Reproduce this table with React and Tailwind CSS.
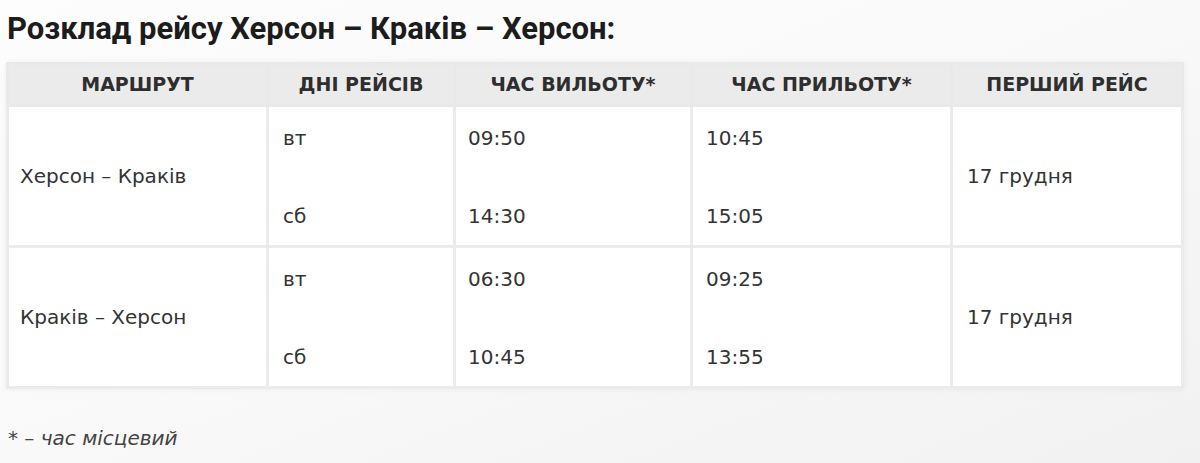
import React from 'react'

const rows = [
  {
    route: 'Херсон – Краків',
    days: ['вт', 'сб'],
    dep: ['09:50', '14:30'],
    arr: ['10:45', '15:05'],
    first: '17 грудня'
  },
  {
    route: 'Краків – Херсон',
    days: ['вт', 'сб'],
    dep: ['06:30', '10:45'],
    arr: ['09:25', '13:55'],
    first: '17 грудня'
  }
]

const heads = ['МАРШРУТ', 'ДНІ РЕЙСІВ', 'ЧАС ВИЛЬОТУ*', 'ЧАС ПРИЛЬОТУ*', 'ПЕРШИЙ РЕЙС']
const widths = ['w-[260px]', 'w-[187px]', 'w-[237px]', 'w-[260px]', 'w-[231px]']

function Pair({ items }) {
  return (
    <div className="flex flex-col justify-between h-[108px] leading-[30px]">
      <span>{items[0]}</span>
      <span>{items[1]}</span>
    </div>
  )
}

export default function App() {
  return (
    <div className="w-[1200px] h-[463px] overflow-hidden bg-gradient-to-br from-[#fdfdfd] via-[#f9f9f9] to-[#f1f1f1] font-['DejaVu_Sans',sans-serif] text-[#333]">
      <h2 className="pl-[7px] pt-[10px] h-[62px] font-['Roboto',sans-serif] font-bold text-[31px] leading-[38px] text-[#1c1c1c]">
        Розклад рейсу Херсон – Краків – Херсон:
      </h2>

      <table className="ml-[6px] border-collapse border-2 border-[#d9d9d9] text-[20px] shadow-[0_0_6px_rgba(0,0,0,0.06)]">
        <thead>
          <tr className="bg-[#ebebeb] h-[42px]">
            {heads.map((h, i) => (
              <th key={h} className={`${widths[i]} border-[3px] border-[#e9e9e9] font-bold text-center text-[19px] text-[#2e2e2e] p-0`}>
                {h}
              </th>
            ))}
          </tr>
        </thead>
        <tbody>
          {rows.map(r => (
            <tr key={r.route} className="bg-white h-[141px]">
              <td className="border-[3px] border-[#ebebeb] align-middle pl-[11px]">{r.route}</td>
              <td className="border-[3px] border-[#ebebeb] align-top pl-[14px] pt-[16px]"><Pair items={r.days} /></td>
              <td className="border-[3px] border-[#ebebeb] align-top pl-[12px] pt-[16px]"><Pair items={r.dep} /></td>
              <td className="border-[3px] border-[#ebebeb] align-top pl-[13px] pt-[16px]"><Pair items={r.arr} /></td>
              <td className="border-[3px] border-[#ebebeb] align-middle pl-[14px]">{r.first}</td>
            </tr>
          ))}
        </tbody>
      </table>

      <p className="pl-[8px] mt-[34px] italic text-[20px] text-[#444]">* – час місцевий</p>
    </div>
  )
}
